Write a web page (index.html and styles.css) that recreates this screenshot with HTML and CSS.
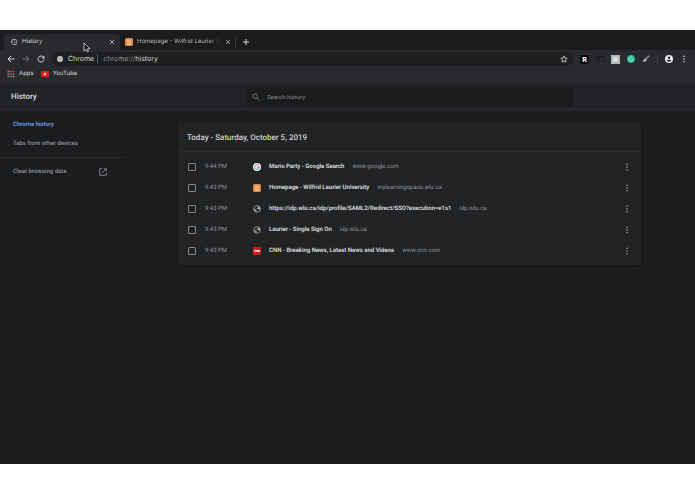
FILE: index.html
```html
<!DOCTYPE html>
<html lang="en">
<head>
<meta charset="utf-8">
<title>History</title>
<link rel="stylesheet" href="styles.css">
</head>
<body>
<svg class="defs" aria-hidden="true">
  <symbol id="x" viewBox="0 0 6 6"><path d="M1 1l4 4M5 1l-4 4" stroke="currentColor" stroke-width=".8"/></symbol>
  <symbol id="dots" viewBox="0 0 8 8"><g fill="currentColor"><circle cx="4" cy="1.2" r=".8"/><circle cx="4" cy="4" r=".8"/><circle cx="4" cy="6.8" r=".8"/></g></symbol>
  <symbol id="globe" viewBox="0 0 24 24"><circle cx="12" cy="12" r="10" fill="none" stroke="currentColor" stroke-width="2.4"/><path fill="currentColor" d="M3 9l5 5 3 1v6l-3-1-5-6zM9 3l6 0 0 4-3 2-1 3h6l2 3 2 0 1-5-3-6-5-2z"/></symbol>
  <symbol id="laurier" viewBox="0 0 8 8"><rect width="8" height="8" rx="1.6" fill="#e28743"/><path d="M2.200 1.500v1.800c0 .8 1.800.8 1.800 0V1.500M4 3.300c0 .8 1.800.8 1.800 0V1.500M2.500 5h3M2.500 6.500h3M5.500 5v1.500M2.500 5v1.500" fill="none" stroke="#ffdcb8" stroke-width=".7"/></symbol>
</svg>
<div class="window">
  <div class="tabs">
    <div class="tab active">
      <svg class="i8" viewBox="0 0 24 24" fill="currentColor"><path d="M13 3a9 9 0 0 0-9 9H1l4 4 4-4H6a7 7 0 1 1 2 5l-1.500 1.500A9 9 0 1 0 13 3zm-1 5v5l4.300 2.500.7-1.200-3.500-2.100V8z"/></svg>
      <span class="tab-name">History</span>
      <button class="bare" aria-label="Close History"><svg class="i6"><use href="#x"/></svg></button>
    </div>
    <div class="tab">
      <svg class="i8"><use href="#laurier"/></svg>
      <span class="tab-name fade">Homepage - Wilfrid Laurier Un</span>
      <button class="bare" aria-label="Close Homepage"><svg class="i6"><use href="#x"/></svg></button>
    </div>
    <button class="bare new" aria-label="New tab"><svg class="i8" viewBox="0 0 8 8"><path d="M4 1v6M1 4h6" stroke="currentColor"/></svg></button>
    <svg class="cursor" viewBox="0 0 8 11"><path d="M1 1v8l2-1.700L4.200 10l1.300-.6-1.200-2.600H7z" fill="#111" stroke="#ddd" stroke-width=".8"/></svg>
  </div>
  <div class="toolbar">
    <button class="bare" aria-label="Back"><svg class="i8" viewBox="0 0 8 8"><path d="M7.500 4H1M4 1L1 4l3 3" fill="none" stroke="currentColor"/></svg></button>
    <button class="bare dim" aria-label="Forward"><svg class="i8" viewBox="0 0 8 8"><path d="M.5 4H7M4 1l3 3-3 3" fill="none" stroke="currentColor"/></svg></button>
    <button class="bare" aria-label="Reload"><svg class="i8" viewBox="0 0 8 8"><path d="M6.500 2.300A3 3 0 1 0 7 4.700" fill="none" stroke="currentColor"/><path d="M7.500.5v3h-3z" fill="currentColor"/></svg></button>
    <div class="address">
      <svg class="i6" viewBox="0 0 8 8"><circle cx="4" cy="4" r="3.900" fill="#d5d6d8"/><circle cx="4" cy="4" r="1.500" fill="#d5d6d8" stroke="#77797c" stroke-width=".6"/><path d="M4 2.300h3.500M2.600 4.900L.9 2M5.400 4.900L3.800 7.700" stroke="#77797c" stroke-width=".6"/></svg>
      <span class="site">Chrome</span>
      <span class="url">chrome://<b>history</b></span>
      <button class="bare" aria-label="Bookmark this page"><svg class="i8" viewBox="0 0 8 8"><path d="M4 .9l.9 2.200 2.300.2-1.800 1.500.6 2.300L4 5.900 2 7.100l.6-2.300L.8 3.300l2.300-.2z" fill="none" stroke="currentColor" stroke-width=".8"/></svg></button>
    </div>
    <div class="extensions">
      <span class="ext black">R</span>
      <svg class="i8" viewBox="0 0 8 8"><rect y="1" width="8" height="6" fill="#141516"/><path d="M1 2.200h6v3.600H1zM4 4h2v1H4z" fill="none" stroke="#4b4d50" stroke-width=".5"/></svg>
      <span class="ext grey">R</span>
      <svg class="i8" viewBox="0 0 8 8"><circle cx="4" cy="4" r="4" fill="#2bb693"/><path d="M5.500 2.500A2 2 0 1 0 6 4.300H4.500" fill="none" stroke="#c4f3e5" stroke-width=".8"/></svg>
      <svg class="i8" viewBox="0 0 8 8"><path d="M.8 7.300l.8-2.800 2-1.500 1.600 1.500-1.600 2z" fill="#a5a6a8"/><path d="M4.300 3.500L7 .8" stroke="#8c8e90" stroke-width="1.500"/></svg>
    </div>
    <button class="bare profile" aria-label="Profile"><svg class="i8" viewBox="0 0 8 8"><circle cx="4" cy="4" r="4" fill="#e9eaeb"/><circle cx="4" cy="2.700" r="1.200" fill="#292a2d"/><path d="M1.700 5.800C2 4.400 6 4.400 6.300 5.800 5.300 7.200 2.700 7.200 1.700 5.800z" fill="#292a2d"/></svg></button>
    <button class="bare" aria-label="Menu"><svg class="i8"><use href="#dots"/></svg></button>
  </div>
  <nav class="bookmarks">
    <a href="#apps"><svg class="i8" viewBox="0 0 8 8"><path d="M.5 1.500h2M.5 4h2" stroke="#df5d4c" stroke-width="1.500"/><path d="M3.300 1.500h1.500M3.300 6.500h1.500" stroke="#4ea466" stroke-width="1.500"/><path d="M5.800 1.500h1.500M3.300 4h1.500" stroke="#dc554a" stroke-width="1.500"/><path d="M5.800 4h1.500M.5 6.500h2" stroke="#4a8de0" stroke-width="1.500"/><path d="M5.800 6.500h1.500" stroke="#e2ad3c" stroke-width="1.500"/></svg>Apps</a>
    <a href="#youtube"><svg class="i8" viewBox="0 0 8 8"><rect y="1" width="8" height="6" rx="1.500" fill="#e5201d"/><path d="M3.200 2.600v2.800L5.500 4z" fill="#fff"/></svg>YouTube</a>
  </nav>
  <header class="header">
    <h1>History</h1>
    <label class="search">
      <svg class="i8" viewBox="0 0 8 8"><circle cx="3.200" cy="3.200" r="2.300" fill="none" stroke="currentColor" stroke-width=".9"/><path d="M5 5l2.500 2.500" stroke="currentColor"/></svg>
      <input type="search" placeholder="Search history" aria-label="Search history">
    </label>
  </header>
  <div class="body">
    <nav class="side">
      <a class="current" href="#history">Chrome history</a>
      <a href="#tabs">Tabs from other devices</a>
      <hr>
      <a href="#clear">Clear browsing data<svg class="i8" viewBox="0 0 8 8"><path d="M3.500.7H.7v6.600h6.600V4.500M5 .7h2.300V3M7.200.8L3 5" fill="none" stroke="currentColor" stroke-width=".8"/></svg></a>
    </nav>
    <main>
      <section class="card">
        <h2>Today - Saturday, October 5, 2019</h2>
        <ul>
          <li><input type="checkbox" aria-label="Mario Party - Google Search"><time>9:44 PM</time><svg class="i8" viewBox="0 0 8 8"><circle cx="4" cy="4" r="4" fill="#f0f0ee"/><path d="M1.900 3A2.300 2.300 0 0 1 5.600 2.300" fill="none" stroke="#dd6050"/><path d="M1.900 3a2.300 2.300 0 0 0 0 2" fill="none" stroke="#dcb04e"/><path d="M1.900 5A2.300 2.300 0 0 0 5.500 5.800" fill="none" stroke="#4ca56a"/><path d="M5.500 5.800A2.300 2.300 0 0 0 6.300 4.100H4.200" fill="none" stroke="#5285cf"/></svg><a href="#1">Mario Party - Google Search</a><span>www.google.com</span><button class="bare" aria-label="Actions"><svg class="i8"><use href="#dots"/></svg></button></li>
          <li><input type="checkbox" aria-label="Homepage"><time>9:43 PM</time><svg class="i8"><use href="#laurier"/></svg><a href="#2">Homepage - Wilfrid Laurier University</a><span>mylearningspace.wlu.ca</span><button class="bare" aria-label="Actions"><svg class="i8"><use href="#dots"/></svg></button></li>
          <li><input type="checkbox" aria-label="idp.wlu.ca"><time>9:43 PM</time><svg class="i8 globe"><use href="#globe"/></svg><a href="#3">https://idp.wlu.ca/idp/profile/SAML2/Redirect/SSO?execution=e1s1</a><span>idp.wlu.ca</span><button class="bare" aria-label="Actions"><svg class="i8"><use href="#dots"/></svg></button></li>
          <li><input type="checkbox" aria-label="Laurier - Single Sign On"><time>9:43 PM</time><svg class="i8 globe"><use href="#globe"/></svg><a href="#4">Laurier - Single Sign On</a><span>idp.wlu.ca</span><button class="bare" aria-label="Actions"><svg class="i8"><use href="#dots"/></svg></button></li>
          <li><input type="checkbox" aria-label="CNN"><time>9:43 PM</time><svg class="i8" viewBox="0 0 8 8"><rect width="8" height="8" fill="#c51c1a"/><path d="M2.800 3.100C.7 2.500.7 5.500 2.800 4.900M3.200 5.200V3l1.500 2V3M5.200 5.200V3l1.500 2V2.900" fill="none" stroke="#fff" stroke-width=".7"/></svg><a href="#5">CNN - Breaking News, Latest News and Videos</a><span>www.cnn.com</span><button class="bare" aria-label="Actions"><svg class="i8"><use href="#dots"/></svg></button></li>
        </ul>
      </section>
    </main>
  </div>
</div>
</body>
</html>
```
FILE: styles.css
```css
* { box-sizing: border-box; }
body {
  margin: 0;
  padding: 30px 0;
  background: #fff;
  font: 6px/10px Roboto, sans-serif;
  text-rendering: geometricPrecision;
  color: #d5d6d8;
}
.defs { position: absolute; width: 0; height: 0; }
.window {
  display: flex;
  flex-direction: column;
  min-height: calc(100vh - 60px);
  background: #1b1c1e;
}
a { color: inherit; text-decoration: none; }
.bare { display: flex; padding: 0; border: 0; background: none; color: inherit; }
.i8 { width: 8px; height: 8px; flex: none; }
.i6 { width: 6px; height: 6px; flex: none; }

.tabs, .toolbar, .bookmarks { font-family: Inter, sans-serif; }
.tabs { position: relative; display: flex; height: 20px; padding: 4px 0 0 4px; background: #1b1c1e; }
.tab { display: flex; align-items: center; gap: 4px; width: 116px; height: 16px; padding: 0 5px 0 6px; color: #b4b6b9; }
.tab.active { background: #292a2d; border-radius: 4px 4px 0 0; color: #d0d1d3; }
.tab-name { flex: 1; min-width: 0; white-space: nowrap; }
.fade { -webkit-mask-image: linear-gradient(90deg, #000 85%, transparent); mask-image: linear-gradient(90deg, #000 85%, transparent); }
.tab:not(.active) { width: 115px; padding: 0 4px 0 5px; }
.new { align-items: center; height: 10px; margin-top: 3px; padding-left: 6px; border-left: 1px solid #3b3c3f; }
.cursor { position: absolute; left: 83px; top: 12px; width: 8px; height: 11px; }

.toolbar { display: flex; align-items: center; gap: 7px; height: 18px; padding: 0 7px; background: #292a2d; }
.dim { color: #77797c; }
.address { display: flex; align-items: center; flex: 1; gap: 5px; height: 14px; padding: 0 5px; border-radius: 7px; background: #1e1f21; font-size: 7px; }
.site { padding-right: 3px; border-right: 1px solid #55575a; }
.url { flex: 1; color: #909295; }
.url b { font-weight: 400; color: #d5d6d8; }
.extensions { display: flex; align-items: center; gap: 7px; padding-right: 7px; border-right: 1px solid #414246; }
.ext { width: 9px; height: 9px; font-size: 7px; font-weight: 700; line-height: 9px; text-align: center; }
.black { background: #0b0c0d; color: #fff; }
.grey { background: #b6b7b9; color: #ededee; }

.bookmarks { display: flex; gap: 7px; height: 16px; padding: 0 7px 4px; background: #292a2d; }
.bookmarks a { display: flex; align-items: center; gap: 4px; }

.header { display: grid; grid-template-columns: 235px 1fr 111px; align-items: center; height: 27px; padding: 0 11px; background: #222326; border-bottom: 1px solid #262729; }
h1 { margin: 0; font-size: 8px; font-weight: 500; color: #dcddde; }
.search { display: flex; align-items: center; gap: 7px; height: 19px; padding: 0 6px; border-radius: 2px; background: #1b1c1e; color: #77797c; }
.search input { flex: 1; min-width: 0; padding: 0; border: 0; outline: 0; background: none; font: inherit; color: #d5d6d8; }
.search input::placeholder { color: #85878a; opacity: 1; }

.body { display: flex; flex: 1; }
.side { display: flex; flex-direction: column; width: 124px; padding-top: 4px; font-weight: 500; color: #93959a; }
.side a { display: flex; align-items: center; justify-content: space-between; height: 19px; padding: 0 17px 0 13px; }
.side .current { color: #7aa3f0; }
.side hr { width: 100%; margin: 4px 0; border: 0; border-top: 1px solid #292a2c; }
main { flex: 1; min-width: 0; padding: 11px 54px; }
.card { background: #222325; border-radius: 2px; box-shadow: 0 1px 2px #151617; }
h2 { margin: 0; padding: 11px 9px 8px; border-bottom: 1px solid #2a2b2d; font-size: 8px; font-weight: 500; color: #cfd0d2; }
ul { margin: 0; padding: 4px 10px; list-style: none; }
li { display: flex; align-items: center; height: 21px; white-space: nowrap; }
li input { appearance: none; width: 8px; height: 8px; margin: 0 9px 0 0; border: 1px solid #858789; border-radius: 1px; }
li time { width: 48px; color: #939598; }
li a { margin: 0 8px; font-weight: 500; color: #e6e7e8; }
li span { color: #939598; }
li .bare { margin-left: auto; color: #a0a2a4; }
.globe { color: #9b9da0; }
```
